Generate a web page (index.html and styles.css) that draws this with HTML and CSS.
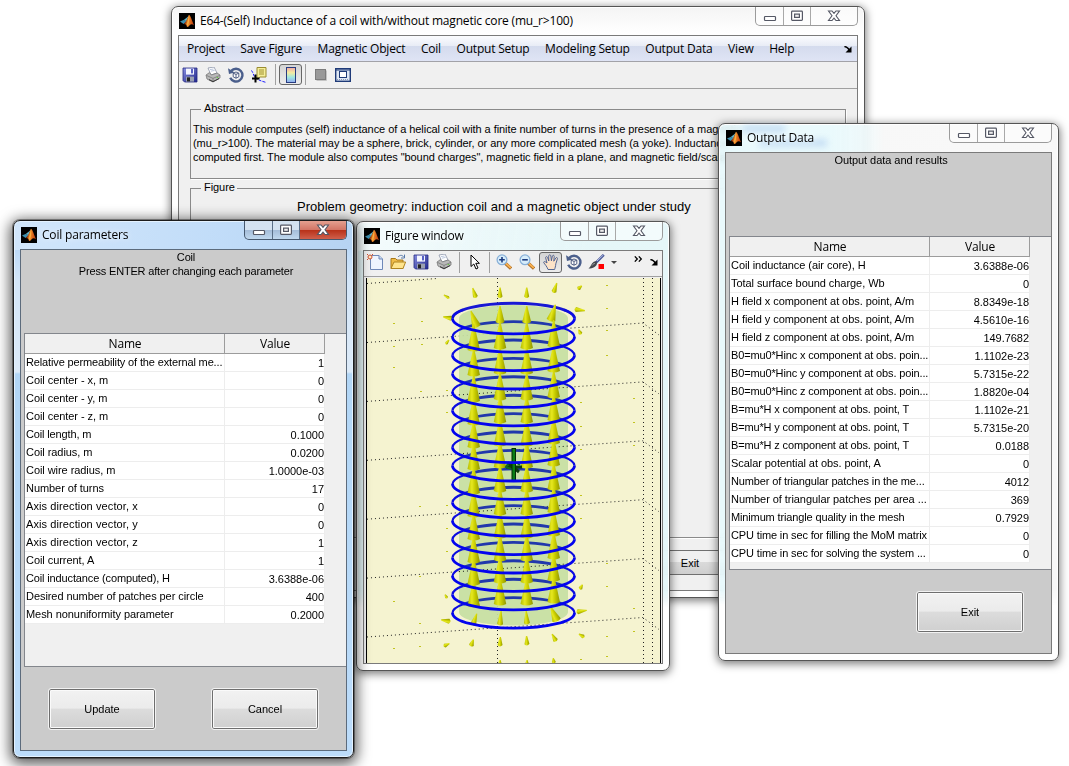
FILE: index.html
```html
<!DOCTYPE html>
<html lang="en">
<head>
<meta charset="utf-8">
<title>E64 Inductance module</title>
<link rel="stylesheet" href="styles.css">
</head>
<body>
<svg class="defs" width="0" height="0">
  <defs>
    <linearGradient id="gFlame" x1="0" x2="1"><stop offset="0" stop-color="#7a1c08"/><stop offset=".45" stop-color="#f08a28"/><stop offset="1" stop-color="#b8330c"/></linearGradient>
    <linearGradient id="gSave" x1="0" y1="0" x2="1" y2="1"><stop offset="0" stop-color="#8a90e0"/><stop offset="1" stop-color="#20268c"/></linearGradient>
    <linearGradient id="gBar" x1="0" y1="0" x2="0" y2="1"><stop offset="0" stop-color="#f0a8a8"/><stop offset=".35" stop-color="#f4ecA0"/><stop offset=".65" stop-color="#a0e8e0"/><stop offset="1" stop-color="#90a8f0"/></linearGradient>
    <linearGradient id="gCone" x1="0" x2="1"><stop offset="0" stop-color="#b4bc00"/><stop offset=".35" stop-color="#e6e820"/><stop offset=".6" stop-color="#c8cc00"/><stop offset="1" stop-color="#8f9400"/></linearGradient>
    <symbol id="matlab" viewBox="0 0 16 16">
      <rect width="16" height="16" fill="#000"/>
      <path d="M1 8.5 5 6.8 7.4 8.6 4.6 11Z" fill="#3c8fb0"/>
      <path d="M5 6.8 8.6 4 10 2 7.4 8.6Z" fill="#5fb3c8"/>
      <path d="M10 1.8C11.6 2.4 13 8 15 12.2 13 10.6 11.8 11 10.4 12.4 9.4 13.6 8.6 14.2 8 14 7.4 11.6 6.4 11 4.8 11 7.4 8.8 8.8 4.6 10 1.8Z" fill="url(#gFlame)"/>
      <path d="M10 2C10.6 5 10.4 9 8.6 13.6L7.4 11C8.8 8.4 9.6 5.4 10 2Z" fill="#ffc04a" opacity=".7"/>
    </symbol>
    <symbol id="save" viewBox="0 0 16 16">
      <path d="M1 1H15V15H2.5L1 13.5Z" fill="url(#gSave)" stroke="#252a80" stroke-width=".8"/>
      <rect x="4" y="1.6" width="8" height="6" fill="#f4f6ff"/><rect x="9" y="2" width="2" height="4.4" fill="#5a62c4"/>
      <rect x="4" y="9.6" width="8" height="5" fill="#9aa0b0"/><rect x="5" y="10.4" width="3" height="4" fill="#222"/>
    </symbol>
    <symbol id="print" viewBox="0 0 16 16">
      <path d="M3 1 9 0 12 6 6 8Z" fill="#fff" stroke="#8c94a8" stroke-width=".8"/>
      <path d="M5 2.6 8.6 2M5.8 4.2 9.6 3.4" stroke="#9fb0d0" stroke-width=".7"/>
      <path d="M1 8 4.5 5.6 6.4 8 12 6 15 8 15 11 8 15 2 12Z" fill="#b9b9b9" stroke="#777" stroke-width=".8"/>
      <path d="M1.4 8.4 8 11.4 14.8 8.4M8 11.4V14.6" stroke="#777" fill="none" stroke-width=".8"/>
      <path d="M4 12.6 8 14.6 14 11.6" stroke="#333" fill="none"/><rect x="11.6" y="10" width="1.6" height="1" fill="#6c4"/>
    </symbol>
    <symbol id="rotate" viewBox="0 0 16 16">
      <path d="M3.2 3.9A6.4 6.4 0 1 1 2.2 10.8" fill="none" stroke="#4b5f8c" stroke-width="2.4"/>
      <path d="M0 1.2 1 7 6.6 5.4Z" fill="#4b5f8c"/>
      <path d="M8 5 10.8 6.2V9.8L8 11.2 5.2 9.8V6.2ZM5.2 6.2 8 7.4 10.8 6.2M8 7.4V11.2" fill="#fff" stroke="#3f4f78" stroke-width=".9"/>
    </symbol>
    <symbol id="cursor-data" viewBox="0 0 16 16">
      <path d="M0 3.5C2 4 2 8 4 10.5 7 13 10 14 15 15.4" fill="none" stroke="#2020ff" stroke-dasharray="3 1.2"/>
      <path d="M6 .5H15V10H9L6 12.5Z" fill="#f4ee98" stroke="#9a8c30"/>
      <path d="M8 3H13M8 5H13M8 7H13" stroke="#a09030"/>
      <path d="M4.5 7.5V15.5M1 11.5H8.5" stroke="#000" stroke-width="2"/>
    </symbol>
    <symbol id="colorbar" viewBox="0 0 16 16"><rect x="3.5" y=".5" width="9" height="15" fill="url(#gBar)" stroke="#283c80"/></symbol>
    <symbol id="hide" viewBox="0 0 16 16"><rect x="2.5" y="2.5" width="10" height="10" fill="#999" stroke="#7c7c7c"/><path d="M3.500 13.500H13.500V3.500" stroke="#c4c4c4" fill="none"/></symbol>
    <symbol id="dock" viewBox="0 0 16 16"><rect x=".7" y="1.7" width="14.6" height="12.6" fill="#dfe8f4" stroke="#1f3b78" stroke-width="1.4"/><path d="M1 3H15" stroke="#1f3b78"/><rect x="4.500" y="4.500" width="7" height="6" fill="#fff" stroke="#1f3b78"/><path d="M2 12.500H14" stroke="#8898b8" stroke-dasharray="1 1"/></symbol>
    <symbol id="new" viewBox="0 0 16 16"><path d="M3.500 1.500H12L15.500 5V15.500H3.500Z" fill="#eef4ff" stroke="#6f88b8"/><path d="M12 1.500V5H15.500" fill="#c8d8f0" stroke="#6f88b8"/><circle cx="3" cy="3" r="2" fill="#ffe8c0" stroke="#d05030"/><path d="M0 0 1 1M6 0 5 1M0 6 1 5" stroke="#d05030"/></symbol>
    <symbol id="open" viewBox="0 0 16 16"><path d="M1 14.500V4.500H5.500L7 6H13V14.500Z" fill="#f0bc48" stroke="#a87818"/><path d="M1 14.500 4 8H15.600L13 14.500Z" fill="#ffe48c" stroke="#b08420"/><path d="M8 3C10 .6 12.500 1 13.600 3M14.500 .6V4H11" fill="none" stroke="#5878a8"/></symbol>
    <symbol id="pointer" viewBox="0 0 10 16"><path d="M1 1V12.500L3.800 10 6 15 8 14 5.800 9.300H9.400Z" fill="#fff" stroke="#000"/></symbol>
    <symbol id="zoomin" viewBox="0 0 16 16"><path d="M9 9 15 14.500" stroke="#a86820" stroke-width="3.200"/><path d="M9.400 9 14.800 14" stroke="#f8b050" stroke-width="1.800"/><circle cx="6" cy="5.800" r="4.900" fill="#d6ecfa" stroke="#88b0d8" stroke-width="1.300"/><path d="M6 3V8.600M3.200 5.800H8.800" stroke="#1c3c80" stroke-width="1.600"/></symbol>
    <symbol id="zoomout" viewBox="0 0 16 16"><path d="M9 9 15 14.500" stroke="#a86820" stroke-width="3.200"/><path d="M9.400 9 14.800 14" stroke="#f8b050" stroke-width="1.800"/><circle cx="6" cy="5.800" r="4.900" fill="#d6ecfa" stroke="#88b0d8" stroke-width="1.300"/><path d="M3.200 5.800H8.800" stroke="#1c3c80" stroke-width="1.600"/></symbol>
    <symbol id="hand" viewBox="0 0 16 16"><path d="M5 15.500C4 12.500 2 10.500 .7 8.600 .6 7.300 2 7.200 4 9L2.600 3.600C2.800 2.300 4.200 2.400 4.600 3.600L5.800 7 5.700 1.800C6 .5 7.500 .5 7.800 1.800L8.400 6.800 9.400 2C9.900 .8 11.200 1.200 11.200 2.400L10.800 7.200 12.800 4C13.600 3 14.800 3.600 14.400 4.800L12.800 9.800C12.600 12.500 12 14 11.600 15.500Z" fill="#fde3c8" stroke="#44598c" stroke-width=".9"/></symbol>
    <symbol id="brush" viewBox="0 0 17 16"><path d="M15.800 .8 8 8.600" stroke="#4c5a98" stroke-width="2.600"/><path d="M15.500 .8 9 7" stroke="#c0c8f0" stroke-width=".9"/><path d="M8.500 7.500C9.600 9 9 11.500 6.500 13 4.500 14.300 2.500 14.600 .5 14.600 3 13 3 9.500 5.500 8 6.500 7.300 7.600 7 8.500 7.500Z" fill="#44484f"/><path d="M4 11.500C5 10 6 9.500 7 9.500" stroke="#aaa" fill="none"/><rect x="10.500" y="10" width="5.500" height="5" fill="#f00"/></symbol>
    <symbol id="undock" viewBox="0 0 8 8"><path d="M.5 2C2 1 3.500 2.500 5.500 5" fill="none" stroke="#000" stroke-width="1.600"/><path d="M7.500 1.500V7.500H1.500Z" fill="#000"/></symbol>
    <symbol id="w-min" viewBox="0 0 14 12"><rect x="1.500" y="6.500" width="11" height="4" rx=".8" fill="#fff" stroke="#555865" stroke-width="1.200"/></symbol>
    <symbol id="w-max" viewBox="0 0 14 12"><rect x="1.600" y="1.100" width="10.800" height="9.300" rx=".8" fill="#fff" stroke="#555865" stroke-width="1.200"/><rect x="4.600" y="4.100" width="4.800" height="3.300" fill="#eee" stroke="#555865" stroke-width="1.200"/></symbol>
    <symbol id="w-close" viewBox="0 0 14 12"><path d="M1.500 1H5L7 3.400 9 1H12.500L9 5.800 12.500 10.500H9L7 8.200 5 10.500H1.500L5 5.800Z" fill="#fff" stroke="#555865" stroke-width="1.100"/></symbol>
  </defs>
</svg>

<div class="desktop">

  <section class="window window--main">
    <header class="titlebar">
      <svg class="titlebar__icon"><use href="#matlab"/></svg>
      <span class="titlebar__text">E64-(Self) Inductance of a coil with/without magnetic core (mu_r&gt;100)</span>
      <div class="caption"><span class="caption__btn"><svg><use href="#w-min"/></svg></span><span class="caption__btn"><svg><use href="#w-max"/></svg></span><span class="caption__btn caption__btn--close"><svg><use href="#w-close"/></svg></span></div>
    </header>
    <div class="client client--main">
      <nav class="menubar">
        <span>Project</span><span>Save Figure</span><span>Magnetic Object</span><span>Coil</span><span>Output Setup</span><span>Modeling Setup</span><span>Output Data</span><span>View</span><span>Help</span>
        <svg class="undock"><use href="#undock"/></svg>
      </nav>
      <div class="toolbar toolbar--main">
        <svg class="tool"><use href="#save"/></svg>
        <svg class="tool"><use href="#print"/></svg>
        <svg class="tool"><use href="#rotate"/></svg>
        <svg class="tool"><use href="#cursor-data"/></svg>
        <i class="sep"></i>
        <span class="pressed"><svg class="tool"><use href="#colorbar"/></svg></span>
        <i class="sep sep--tight"></i>
        <svg class="tool"><use href="#hide"/></svg>
        <svg class="tool"><use href="#dock"/></svg>
      </div>
      <div class="panel">
        <fieldset class="group group--abstract">
          <legend>Abstract</legend>
          <p>This module computes (self) inductance of a helical coil with a finite number of turns in the presence of a magnetic<br>(mu_r&gt;100). The material may be a sphere, brick, cylinder, or any more complicated mesh (a yoke). Inductance<br>computed first. The module also computes "bound charges", magnetic field in a plane, and magnetic field/scalar</p>
        </fieldset>
        <fieldset class="group group--figure">
          <legend>Figure</legend>
          <p>Problem geometry: induction coil and a magnetic object under study</p>
        </fieldset>
        <div class="panel__footer"><button class="flat-btn">Exit</button></div>
      </div>
    </div>
  </section>

  <section class="window window--output">
    <header class="titlebar">
      <svg class="titlebar__icon"><use href="#matlab"/></svg>
      <span class="titlebar__text">Output Data</span>
      <div class="caption"><span class="caption__btn"><svg><use href="#w-min"/></svg></span><span class="caption__btn"><svg><use href="#w-max"/></svg></span><span class="caption__btn caption__btn--close"><svg><use href="#w-close"/></svg></span></div>
    </header>
    <div class="client client--form">
      <div class="form-head">Output data and results</div>
      <div class="sheet">
        <div class="row row--head"><span>Name</span><span>Value</span></div>
        <div class="row"><span>Coil inductance (air core), H</span><span>3.6388e-06</span></div>
        <div class="row"><span>Total surface bound charge, Wb</span><span>0</span></div>
        <div class="row"><span>H field x component at obs. point, A/m</span><span>8.8349e-18</span></div>
        <div class="row"><span>H field y component at obs. point, A/m</span><span>4.5610e-16</span></div>
        <div class="row"><span>H field z component at obs. point, A/m</span><span>149.7682</span></div>
        <div class="row row--snug"><span>B0=mu0*Hinc x component at obs. poin...</span><span>1.1102e-23</span></div>
        <div class="row row--snug"><span>B0=mu0*Hinc y component at obs. poin...</span><span>5.7315e-22</span></div>
        <div class="row row--snug"><span>B0=mu0*Hinc z component at obs. poin...</span><span>1.8820e-04</span></div>
        <div class="row row--snug"><span>B=mu*H x component at obs. point, T</span><span>1.1102e-21</span></div>
        <div class="row row--snug"><span>B=mu*H y component at obs. point, T</span><span>5.7315e-20</span></div>
        <div class="row row--snug"><span>B=mu*H z component at obs. point, T</span><span>0.0188</span></div>
        <div class="row"><span>Scalar potential at obs. point, A</span><span>0</span></div>
        <div class="row row--snug"><span>Number of triangular patches in the me...</span><span>4012</span></div>
        <div class="row"><span>Number of triangular patches per area ...</span><span>369</span></div>
        <div class="row row--snug"><span>Minimum triangle quality in the mesh</span><span>0.7929</span></div>
        <div class="row row--snug"><span>CPU time in sec for filling the MoM matrix</span><span>0</span></div>
        <div class="row row--snug"><span>CPU time in sec for solving the system ...</span><span>0</span></div>
      </div>
      <div class="buttons buttons--output"><button class="btn">Exit</button></div>
    </div>
  </section>

  <section class="window window--figure">
    <header class="titlebar">
      <svg class="titlebar__icon"><use href="#matlab"/></svg>
      <span class="titlebar__text">Figure window</span>
      <div class="caption"><span class="caption__btn"><svg><use href="#w-min"/></svg></span><span class="caption__btn"><svg><use href="#w-max"/></svg></span><span class="caption__btn caption__btn--close"><svg><use href="#w-close"/></svg></span></div>
    </header>
    <div class="client client--figure">
      <div class="toolbar toolbar--figure">
        <svg class="tool"><use href="#new"/></svg>
        <svg class="tool"><use href="#open"/></svg>
        <svg class="tool"><use href="#save"/></svg>
        <svg class="tool"><use href="#print"/></svg>
        <i class="sep"></i>
        <svg class="tool tool--pointer"><use href="#pointer"/></svg>
        <i class="sep"></i>
        <svg class="tool"><use href="#zoomin"/></svg>
        <svg class="tool"><use href="#zoomout"/></svg>
        <span class="pressed"><svg class="tool"><use href="#hand"/></svg></span>
        <svg class="tool"><use href="#rotate"/></svg>
        <svg class="tool tool--brush"><use href="#brush"/></svg>
        <i class="drop"></i>
        <svg class="more" viewBox="0 0 9 6"><path d="M.8 .4 3.300 3 .8 5.600M4.800 .4 7.300 3 4.800 5.600" fill="none" stroke="#000" stroke-width="1.300"/></svg>
        <svg class="undock"><use href="#undock"/></svg>
      </div>
      <svg class="plot" id="plot" viewBox="364 277 298 386"></svg>
    </div>
  </section>

  <section class="window window--coil">
    <header class="titlebar">
      <svg class="titlebar__icon"><use href="#matlab"/></svg>
      <span class="titlebar__text">Coil parameters</span>
      <div class="caption"><span class="caption__btn"><svg><use href="#w-min"/></svg></span><span class="caption__btn"><svg><use href="#w-max"/></svg></span><span class="caption__btn caption__btn--close"><svg><use href="#w-close"/></svg></span></div>
    </header>
    <div class="client client--form">
      <div class="form-head form-head--snug">Coil<br>Press ENTER after changing each parameter</div>
      <div class="sheet">
        <div class="row row--head"><span>Name</span><span>Value</span></div>
        <div class="row row--snug"><span>Relative permeability of the external me...</span><span>1</span></div>
        <div class="row"><span>Coil center - x, m</span><span>0</span></div>
        <div class="row"><span>Coil center - y, m</span><span>0</span></div>
        <div class="row"><span>Coil center - z, m</span><span>0</span></div>
        <div class="row row--snug"><span>Coil length, m</span><span>0.1000</span></div>
        <div class="row"><span>Coil radius, m</span><span>0.0200</span></div>
        <div class="row"><span>Coil wire radius, m</span><span>1.0000e-03</span></div>
        <div class="row"><span>Number of turns</span><span>17</span></div>
        <div class="row row--wide"><span>Axis direction vector, x</span><span>0</span></div>
        <div class="row row--wide"><span>Axis direction vector, y</span><span>0</span></div>
        <div class="row row--wide"><span>Axis direction vector, z</span><span>1</span></div>
        <div class="row"><span>Coil current, A</span><span>1</span></div>
        <div class="row row--snug"><span>Coil inductance (computed), H</span><span>3.6388e-06</span></div>
        <div class="row"><span>Desired number of patches per circle</span><span>400</span></div>
        <div class="row"><span>Mesh nonuniformity parameter</span><span>0.2000</span></div>
      </div>
      <div class="buttons buttons--coil"><button class="btn">Update</button><button class="btn">Cancel</button></div>
    </div>
  </section>

</div>
<script src="plot.js"></script>
</body>
</html>
```

FILE: styles.css
```css
* { box-sizing: border-box; }
body { margin: 0; background: #fff; font-family: "Liberation Sans", Arial, sans-serif; font-size: 11px; color: #000; }
.defs { position: absolute; }
.desktop { position: relative; width: 1069px; height: 766px; overflow: hidden; }

/* window frames */
.window { position: absolute; display: flex; flex-direction: column; padding: 0 6px 6px; border: 1px solid #555; border-radius: 7px; background: #fff; box-shadow: inset 0 0 0 1px #fff, 0 2px 9px 1px rgba(0,0,0,.5); }
.window--main { left: 171px; top: 6px; width: 694px; height: 592px; background: linear-gradient(#f4f4f4, #fff 26px); }
.window--output { left: 718px; top: 123px; width: 341px; height: 538px; background: linear-gradient(rgba(255,255,255,0) 466px, #fff 482px), linear-gradient(90deg, rgba(232,251,254,.85) 0 110px, rgba(240,251,253,.88) 146px, rgba(247,247,247,.9) 165px); backdrop-filter: blur(3px); }
.window--figure { left: 356px; top: 221px; width: 314px; height: 450px; background: linear-gradient(100deg, rgba(255,255,255,.55), rgba(255,255,255,0) 75%) 0 0 / 100% 29px no-repeat, linear-gradient(rgba(228,247,249,.9) 0 370px, rgba(255,255,255,.95) 385px); backdrop-filter: blur(3px); }
.window--coil { left: 13px; top: 220px; width: 341px; height: 538px; border: 1px solid #1c1c1c; background: linear-gradient(100deg, rgba(230,242,254,.5) 0, rgba(230,242,254,.1) 60%, rgba(160,190,225,.25) 100%) 0 0 / 100% 29px no-repeat, linear-gradient(#bddaf8 0 28px, #d4e6f8 60px, #dceaf8 151px, #b2d6f6 153px, #bcdcfa); box-shadow: inset 0 0 0 1px #e4f2ff, 0 0 0 1px rgba(0,0,0,.35), 0 3px 14px 3px rgba(0,0,0,.65); }

/* soft shapes of the text seen through the glass title bar */
.window--output::before, .window--output::after { content: ""; position: absolute; height: 8px; background: #9fc0ea; opacity: .45; filter: blur(3px); z-index: -1; }
.window--output::before { left: 24px; top: 1px; width: 42px; }
.window--output::after { left: 40px; top: 15px; width: 68px; }

.titlebar { flex: 0 0 28px; display: flex; align-items: flex-start; font-family: "Open Sans", "Noto Sans", sans-serif; font-size: 12px; padding-left: 1px; }
.titlebar__icon { width: 16px; height: 16px; margin-top: 6px; flex: none; }
.titlebar__text { margin: 5px 0 0 5px; line-height: 18px; white-space: nowrap; letter-spacing: -.19px; text-shadow: 0 0 6px #fff; }
.window--output .titlebar__text, .window--figure .titlebar__text { letter-spacing: -.22px; }
.caption { margin-left: auto; display: flex; height: 19px; border: 1px solid #9b9b9b; border-top: 0; border-radius: 0 0 5px 5px; overflow: hidden; background: rgba(255,255,255,.5); }
.caption__btn { width: 28px; display: flex; align-items: center; justify-content: center; border-right: 1px solid #a8a8a8; }
.caption__btn + .caption__btn { width: 27px; }
.caption__btn + .caption__btn--close { width: 46px; border-right: 0; }
.caption__btn svg { width: 14px; height: 12px; }
.window--coil .caption { border-color: #46586e; background: linear-gradient(#d4e2f0 0 9px, #a4bcd8 9px, #c0d8ee); }
.window--coil .caption__btn { border-color: #5a6e86; }
.window--coil .caption__btn--close { background: linear-gradient(#e4a090, #d27464 9px, #b83018 9px, #d0604c); }

.client { flex: 1; min-height: 0; border: 1px solid #7a7a7a; display: flex; flex-direction: column; background: #f0f0f0; overflow: hidden; }
.client--form { background: #cbcbcb; padding-left: 3px; }
.window--coil .client { border-color: #5c6b7c; }

/* menu and toolbars */
.menubar { flex: 0 0 26px; display: flex; align-items: center; gap: 15.600px; padding: 0 5px 0 8px; border-bottom: 1px solid #a2a2a8; background: linear-gradient(#fbfcfe, #e8ecf6 10px, #d4dbed 10px, #dfe4f5); font-family: "Open Sans", "Noto Sans", sans-serif; font-size: 12px; letter-spacing: -.2px; white-space: nowrap; }
.undock { width: 8px; height: 8px; margin-left: auto; flex: none; }
.toolbar { display: flex; align-items: center; background: #f0f0f0; border-bottom: 1px solid #a0a0a0; }
.tool { width: 16px; height: 16px; flex: none; margin-right: 7px; }
.sep { width: 1px; height: 21px; background: #a0a0a0; flex: none; }
.pressed { width: 23px; height: 21px; flex: none; display: flex; align-items: center; justify-content: center; border: 1px solid #666; border-radius: 3px; background: linear-gradient(#d4d4d4, #ececec); }
.pressed .tool { margin: 0; }
.toolbar--main { flex: 0 0 27px; padding: 0 0 1px 3px; }
.toolbar--main .sep { margin: 0 3px 0 1px; }
.toolbar--main .sep--tight { margin: 0 7px 0 3px; }
.toolbar--main .sep--tight ~ .tool { margin-right: 6px; }
.toolbar--figure { flex: 0 0 26px; padding: 0 4px 3px 3px; }
.tool--pointer { width: 10px; margin: 0 9px 0 10px; }
.toolbar--figure .sep + .tool:not(.tool--pointer) { margin-left: 6px; }
.toolbar--figure .pressed { margin: 0 4px 0 -3px; }
.toolbar--figure .pressed + .tool { margin-right: 6px; }
.tool--brush { width: 17px; margin-right: 6px; }
.drop { border: 3px solid transparent; border-top-color: #444; border-bottom: 0; }
.more { width: 9px; height: 6px; margin: -6px 0 0 17px; }

/* main window body */
.panel { flex: 1; display: flex; flex-direction: column; padding: 12px 11px 0; background: #f0f0f0; }
.group { margin: 0; min-width: 0; padding: 0; border: 1px solid #8a8a8a; box-shadow: 1px 1px 0 #fff; line-height: 14px; letter-spacing: -.06px; }
.group legend { margin-left: 10px; padding: 0 2px 0 3px; height: 17px; line-height: 14px; }
.group p { margin: 0; white-space: nowrap; }
.group--abstract { height: 78px; flex: none; }
.group--abstract p { padding: 4px 0 0 2px; }
.group--figure { flex: 0 0 358px; margin-top: 1px; }
.group--figure p { padding: 2px 0 0 106px; font-size: 13px; line-height: 16px; letter-spacing: .045px; }
.panel__footer { display: flex; padding: 12px 0 0 440px; }
.flat-btn { width: 120px; height: 25px; padding: 0; border: 1px solid #707070; background: linear-gradient(#f0f0f0 0 11px, #dadada 11px, #cfcfcf); font: inherit; color: #000; }

/* parameter sheets */
.form-head { flex: 0 0 83px; padding-left: 2px; text-align: center; line-height: 14px; letter-spacing: -.05px; }
.form-head--snug { letter-spacing: -.17px; }
.sheet { height: 334px; border: 1px solid #83868c; border-right: 0; background: #f0f0f0; flex: none; }
.row { display: grid; grid-template-columns: 200px 100px; grid-template-rows: 18px; width: 300px; line-height: 16px; }
.row span { border-right: 1px solid #ededed; border-bottom: 1px solid #ededed; background: #fff; padding-left: 1px; white-space: nowrap; letter-spacing: -.06px; }
.row span + span { text-align: right; padding: 1px 0 0; letter-spacing: -.04px; }
.row--snug span:first-child { letter-spacing: -.14px; }
.row--wide span:first-child { letter-spacing: .1px; }
.row--head { grid-template-rows: 20px; line-height: 20px; font-family: "Open Sans", "Noto Sans", sans-serif; font-size: 12px; }
.row--head span, .row--head span + span { text-align: center; background: #f0f0f0; border-color: #9c9c9c; padding: 0 0 0 1px; letter-spacing: -.2px; }
.buttons { display: flex; }
.buttons--output { padding: 21px 0 0 187px; }
.buttons--coil { padding: 21px 0 0 24px; gap: 55px; }
.btn { width: 108px; height: 42px; padding: 0; border: 1px solid #f2f2f2; background: linear-gradient(#f2f2f2, #ebebeb 48%, #dcdcdc 50%, #cfcfcf); box-shadow: inset 0 0 0 1px #6e6e6e, inset 0 0 0 2px #fafafa; border-radius: 3px; font: inherit; color: #000; }

.plot { flex: 1; display: block; width: 298px; min-height: 0; background: #f5f3d0; }
```

FILE: plot.js
```js
(function () {
  var svg = document.getElementById('plot');
  var out = [];
  var cx = 513.5, rx = 61, ry = 15.3, first = 318.5, pitch = 18.4, turns = 17;

  function cone(x, y, h, w, angle) {
    var a = angle || 0;
    out.push('<path transform="translate(' + x + ' ' + y + ') rotate(' + a + ')" d="M-.6 ' + -h +
      'H.6L' + w / 2 + ' -1Q0 2 ' + -w / 2 + ' -1Z" fill="url(#gCone)"/>');
  }
  function dots(d) {
    out.push('<path d="' + d + '" fill="none" stroke="#222" stroke-width="1" stroke-dasharray="1 3"/>');
  }

  out.push('<rect x="364" y="277" width="298" height="386" fill="#f0f0f0"/>');
  out.push('<rect x="366" y="278" width="295" height="385" fill="#f5f3d0"/>');

  // axes box
  dots('M367 283.500L437 278.500');
  for (var i = 0; i < 6; i++) {
    var y = 342.5 + i * 58.9;
    dots('M367 ' + y + 'L643 ' + (y - 19.5) + 'L659 ' + (y - 7.5));
  }
  [497.5, 643.5, 652.5].forEach(function (x) { dots('M' + x + ' 278V663'); });

  // translucent core
  out.push('<path d="M459 318.500A54.500 13.500 0 0 1 568 318.500V612A54.500 13.500 0 0 1 459 612Z" fill="#c6dfa3" fill-opacity=".93"/>');
  for (i = 1; i < 5; i++) {
    y = 342.5 + i * 58.9;
    dots('M459 ' + (y - 6.5) + 'L568 ' + (y - 14.2));
  }

  // far half of every turn
  for (i = 0; i < turns; i++) {
    y = first + i * pitch;
    out.push('<path d="M' + (cx - rx) + ' ' + y + 'A' + rx + ' ' + ry + ' 0 0 1 ' + (cx + rx) + ' ' + y +
      '" fill="none" stroke="' + (i ? '#2138ac' : '#1818d4') + '" stroke-width="2.900"' + (i ? ' pathLength="100" stroke-dasharray="0 11 78 11"' : '') + '/>');
  }

  // field arrows
  var xs = [473.7, 500, 526.7, 553.7];
  var rows = [323, 349, 374, 400, 423, 446, 468, 492, 515, 538, 561, 583, 605];
  rows.forEach(function (b, r) {
    xs.forEach(function (x, c) {
      var edge = r === 0;
      var off = c === 0 ? 2 : c === 3 ? -2 : 0;
      cone(x + (edge ? (c === 0 ? 3 : c === 3 ? -3 : 0) : 0), b + off + (edge && c === 0 ? 2 : 0), edge ? 17 : 27, edge ? 9 : 12.5, edge ? (c === 0 ? -20 : c === 3 ? 16 : 0) : 0);
    });
  });
  [-18, 0, 0, 18].forEach(function (a, c) { cone(xs[c] + (c === 0 ? 2 : 0), 297.5 - (c === 3 ? 5 : 0), 10, 5, a); });
  [[473, 625, 12, 6, 18], [500, 625, 14, 6, 4], [527, 624, 13, 6, -4], [557, 621, 15, 9, -24],
   [471, 646, 7, 5, 20], [500, 646, 9, 5, 2], [527, 645, 9, 5, -3], [556, 641, 8, 5, -30],
   [500, 664, 4, 3, 0], [527, 664, 4, 3, 0], [554, 663, 5, 4, -10],
   [449, 298, 6, 3, -60], [578, 289, 5, 4, 50], [452, 318.5, 9, 5, -80], [575, 309.5, 10, 5, 96],
   [450, 621.5, 9, 5, -80], [577, 612, 10, 5, 80], [444, 646, 6, 4, 65], [584, 637, 6, 4, -60],
   [446, 344, 5, 3, 35], [581, 334, 5, 4, -30], [447, 598, 4, 3, -30], [580, 589, 5, 4, 30]
  ].forEach(function (c) { cone(c[0], c[1], c[2], c[3], c[4]); });

  // weak samples far from the coil
  [[420, 298], [606, 285], [393, 323], [421, 321], [606, 308], [393, 346], [421, 344],
   [606, 355], [393, 367], [420, 391], [446, 390], [606, 330], [446, 412], [580, 402], [633, 398], [580, 426], [633, 422],
   [580, 449], [633, 445], [446, 505], [580, 495], [419, 506], [446, 528], [580, 518], [446, 551],
   [419, 576], [393, 601], [606, 586], [419, 623], [606, 563], [633, 608], [393, 648], [419, 646], [606, 636],
   [633, 631], [580, 659], [606, 656]
  ].forEach(function (p) { out.push('<rect x="' + p[0] + '" y="' + p[1] + '" width="2" height="1" fill="#c2c420"/>'); });

  // base marker at the origin
  out.push('<path d="M506 467H522M508 463L519 472" stroke="#0b3d0b" stroke-width="3"/><rect x="512" y="448.500" width="3.500" height="32" fill="#0a7d14" stroke="#052c05"/><path d="M509 462L506 467L511 469M517 463L520 465" stroke="#0f6a1c" stroke-width="2" fill="none"/>');

  // near half of every turn
  for (i = 0; i < turns; i++) {
    y = first + i * pitch;
    var t = 'M' + (cx - rx) + ' ' + y;
    out.push('<path d="' + t + 'A' + rx + ' ' + ry + ' 0 0 0 ' + (cx + rx) + ' ' + y + '" fill="none" stroke="#0404ee" stroke-width="2.800"/>');
    out.push('<path d="' + t + 'A' + rx + ' ' + ry + ' 0 0 1 ' + (cx + rx) + ' ' + y + '" fill="none" stroke="#0c0ce0" stroke-width="2.200" pathLength="100" stroke-dasharray="11 78 11"/>');
  }

  out.push('<path d="M366.500 278V663M660.500 278V663" stroke="#000"/>');
  svg.innerHTML = out.join('');
})();
```
